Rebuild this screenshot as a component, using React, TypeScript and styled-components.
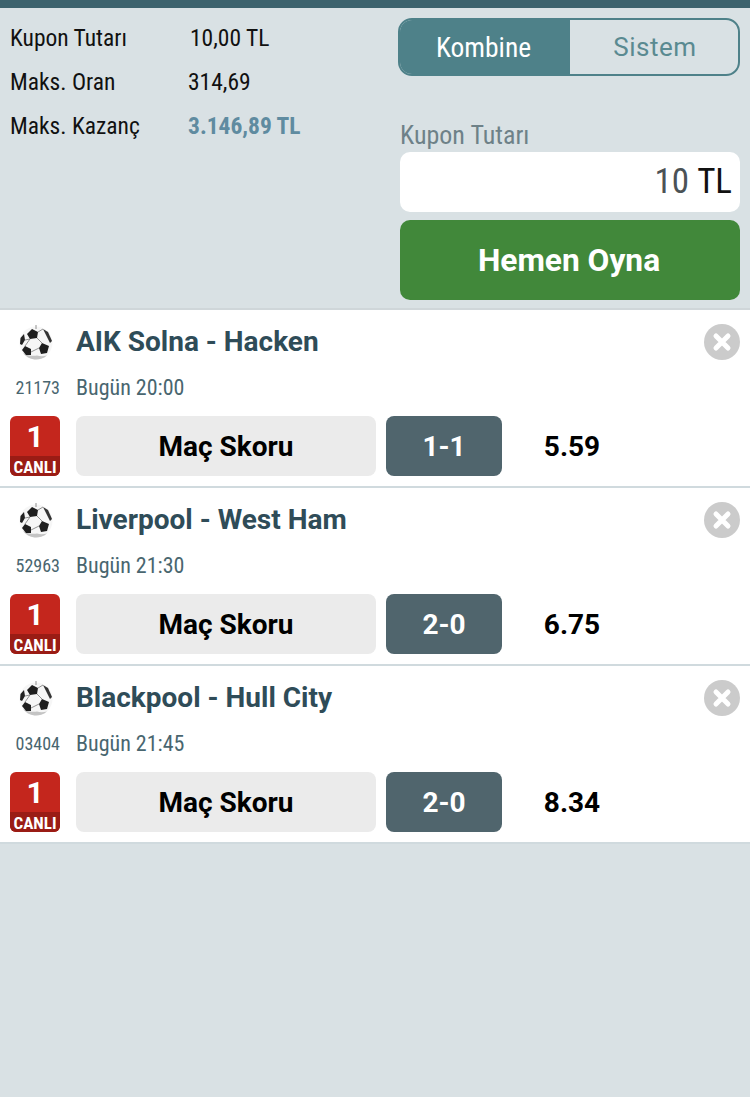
import React from "react";
import styled, { createGlobalStyle } from "styled-components";

const Global = createGlobalStyle`
  html, body { margin: 0; padding: 0; background: #d9e1e4; }
  body { font-family: Roboto, "Liberation Sans", sans-serif; }
`;

const Page = styled.div`
  width: 750px;
  height: 1097px;
  background: #d9e1e4;
  overflow: hidden;
`;

const TopBar = styled.div`
  height: 8px;
  background: #3c626d;
`;

const Summary = styled.section`
  height: 300px;
  display: flex;
  justify-content: space-between;
  padding: 10px 10px 0 10px;
  box-sizing: border-box;
`;

const Totals = styled.div`
  display: grid;
  grid-template-columns: 178px auto;
  grid-auto-rows: 44px;
  align-content: start;
  align-items: center;
  margin-top: -2px;
  font-stretch: 75%;
  font-size: 23.5px;
  color: #111;
`;

const Cell = styled.span<{ $offset?: number }>`
  white-space: nowrap;
  margin-left: ${(p) => p.$offset ?? 0}px;
`;

const Win = styled(Cell)`
  font-weight: 700;
  color: #5f8ba0;
`;

const Controls = styled.div`
  width: 340px;
  display: flex;
  flex-direction: column;
`;

const Toggle = styled.div`
  display: flex;
  height: 58px;
  margin-left: -2px;
  width: 342px;
  border-radius: 14px;
  border: 2px solid #4e8189;
  box-sizing: border-box;
  overflow: hidden;
`;

const ToggleItem = styled.div<{ $active?: boolean }>`
  flex: ${(p) => (p.$active ? "0 0 170px" : "1 1 0")};
  box-sizing: border-box;
  display: flex;
  align-items: center;
  justify-content: center;
  font-size: ${(p) => (p.$active ? "27.5px" : "26px")};
  font-stretch: ${(p) => (p.$active ? "75%" : "100%")};
  letter-spacing: ${(p) => (p.$active ? "0" : "0.5px")};
  padding: ${(p) => (p.$active ? "0 3px 0 0" : "0 0 0 2px")};
  background: ${(p) => (p.$active ? "#4e8189" : "transparent")};
  color: ${(p) => (p.$active ? "#fff" : "#5a8a91")};
`;

const AmountLabel = styled.div`
  margin-top: 43px;
  height: 33px;
  font-size: 26px;
  font-stretch: 75%;
  line-height: 33px;
  color: #6e8188;
  white-space: nowrap;
`;

const AmountBox = styled.div`
  height: 60px;
  background: #fff;
  border-radius: 10px;
  display: flex;
  align-items: center;
  justify-content: flex-end;
  padding: 0 8px 2px 0;
  box-sizing: border-box;
  font-size: 35px;
  font-stretch: 75%;
  color: #111;
`;

const AmountNumber = styled.span`
  color: #4b5256;
  margin-right: 8px;
`;

const PlayButton = styled.button`
  margin-top: 8px;
  height: 80px;
  border: 0;
  border-radius: 10px;
  background: #41883a;
  color: #fff;
  padding: 0 2px 0 0;
  font: 700 31.7px Roboto, sans-serif;
`;

const List = styled.div`
  border-top: 2px solid #cfd6d9;
`;

const Row = styled.article`
  height: 176px;
  background: #fff;
  border-bottom: 2px solid #d0dade;
  padding: 0 10px;
  display: flex;
  flex-direction: column;
  position: relative;
`;

const Head = styled.div`
  height: 62px;
  display: flex;
  align-items: center;
`;

const BallSlot = styled.div`
  width: 50px;
  margin-right: 16px;
  display: flex;
  justify-content: center;
  padding: 4px 0 0 2px;
  box-sizing: border-box;
`;

const Match = styled.h3`
  margin: 0;
  font-size: 28px;
  font-weight: 700;
  color: #2f4c58;
`;

const Close = styled.div`
  position: absolute;
  right: 10px;
  top: 14px;
  width: 36px;
  height: 36px;
`;

const Meta = styled.div`
  height: 30px;
  display: flex;
  align-items: center;
  color: #49666f;
  font-stretch: 75%;
`;

const Code = styled.span`
  width: 50px;
  margin-right: 16px;
  font-size: 18px;
  text-align: right;
  white-space: nowrap;
`;

const Time = styled.span`
  font-size: 22px;
`;

const Bet = styled.div`
  display: flex;
  align-items: center;
  margin-top: 14px;
  height: 60px;
`;

const Live = styled.div`
  width: 50px;
  height: 60px;
  border-radius: 6px;
  overflow: hidden;
  margin-right: 16px;
  display: flex;
  flex-direction: column;
  background: #c4261d;
  color: #fff;
  font-weight: 700;
  text-align: center;
`;

const LiveNum = styled.div`
  height: 40px;
  line-height: 42px;
  font-size: 30px;
`;

const LiveTag = styled.div`
  height: 20px;
  line-height: 22px;
  font-size: 17px;
  font-stretch: 75%;
  background: #9a1c15;
`;

const Market = styled.div`
  width: 300px;
  height: 60px;
  border-radius: 8px;
  background: #ebebeb;
  color: #000;
  display: flex;
  align-items: center;
  justify-content: center;
  font-size: 28px;
  font-weight: 700;
`;

const Pick = styled.div`
  width: 116px;
  height: 60px;
  margin-left: 10px;
  border-radius: 8px;
  background: #50656d;
  color: #fff;
  display: flex;
  align-items: center;
  justify-content: center;
  font-size: 28px;
  font-weight: 700;
`;

const Odd = styled.div`
  width: 140px;
  text-align: center;
  font-size: 28px;
  font-weight: 700;
  color: #000;
`;

const Ball = () => (
  <svg width="38" height="38" viewBox="0 0 38 38">
    <circle cx="19" cy="19" r="16.5" fill="#f6f6f6" />
    <path d="M6 29a16.5 16.5 0 0 0 24 2.5c-4 1-7 1-10 0-4 .8-9 .2-14-2.500z" fill="#c4c4c4" />
    <polygon points="15,5 21,8 20,14 13,15 10,10" fill="#1e1e1e" />
    <polygon points="3.500,14 7,10 8,16 5,21 3,20" fill="#222" />
    <polygon points="8,22 14,25 14,31 9,31 5,26" fill="#1e1e1e" />
    <polygon points="25,19 32,22 30,29 24,30 22,24" fill="#1e1e1e" />
    <polygon points="26,5 31,8 35,17 33,19 30,13" fill="#333" />
    <path d="M19 1v4M13 15l-5 7M20 14l5 5M14 28l8-4M21 8l5-3M8 16l5-1" stroke="#777" strokeWidth="0.8" fill="none" />
  </svg>
);

const CloseIcon = () => (
  <svg width="36" height="36" viewBox="0 0 36 36">
    <circle cx="18" cy="18" r="18" fill="#cbcbcb" />
    <path d="M12 12l12 12M24 12L12 24" stroke="#fff" strokeWidth="5" strokeLinecap="round" />
  </svg>
);

const bets = [
  { match: "AIK Solna - Hacken", code: "21173", time: "Bugün 20:00", pick: "1-1", odd: "5.59" },
  { match: "Liverpool - West Ham", code: "52963", time: "Bugün 21:30", pick: "2-0", odd: "6.75" },
  { match: "Blackpool - Hull City", code: "03404", time: "Bugün 21:45", pick: "2-0", odd: "8.34" },
];

export default function App() {
  return (
    <Page>
      <Global />
      <TopBar />
      <Summary>
        <Totals>
          <Cell>Kupon Tutarı</Cell>
          <Cell $offset={2}>10,00 TL</Cell>
          <Cell>Maks. Oran</Cell>
          <Cell>314,69</Cell>
          <Cell>Maks. Kazanç</Cell>
          <Win>3.146,89 TL</Win>
        </Totals>
        <Controls>
          <Toggle>
            <ToggleItem $active>Kombine</ToggleItem>
            <ToggleItem>Sistem</ToggleItem>
          </Toggle>
          <AmountLabel>Kupon Tutarı</AmountLabel>
          <AmountBox><AmountNumber>10</AmountNumber>TL</AmountBox>
          <PlayButton>Hemen Oyna</PlayButton>
        </Controls>
      </Summary>
      <List>
        {bets.map((b) => (
          <Row key={b.code}>
            <Head>
              <BallSlot><Ball /></BallSlot>
              <Match>{b.match}</Match>
            </Head>
            <Close><CloseIcon /></Close>
            <Meta>
              <Code>{b.code}</Code>
              <Time>{b.time}</Time>
            </Meta>
            <Bet>
              <Live>
                <LiveNum>1</LiveNum>
                <LiveTag>CANLI</LiveTag>
              </Live>
              <Market>Maç Skoru</Market>
              <Pick>{b.pick}</Pick>
              <Odd>{b.odd}</Odd>
            </Bet>
          </Row>
        ))}
      </List>
    </Page>
  );
}
